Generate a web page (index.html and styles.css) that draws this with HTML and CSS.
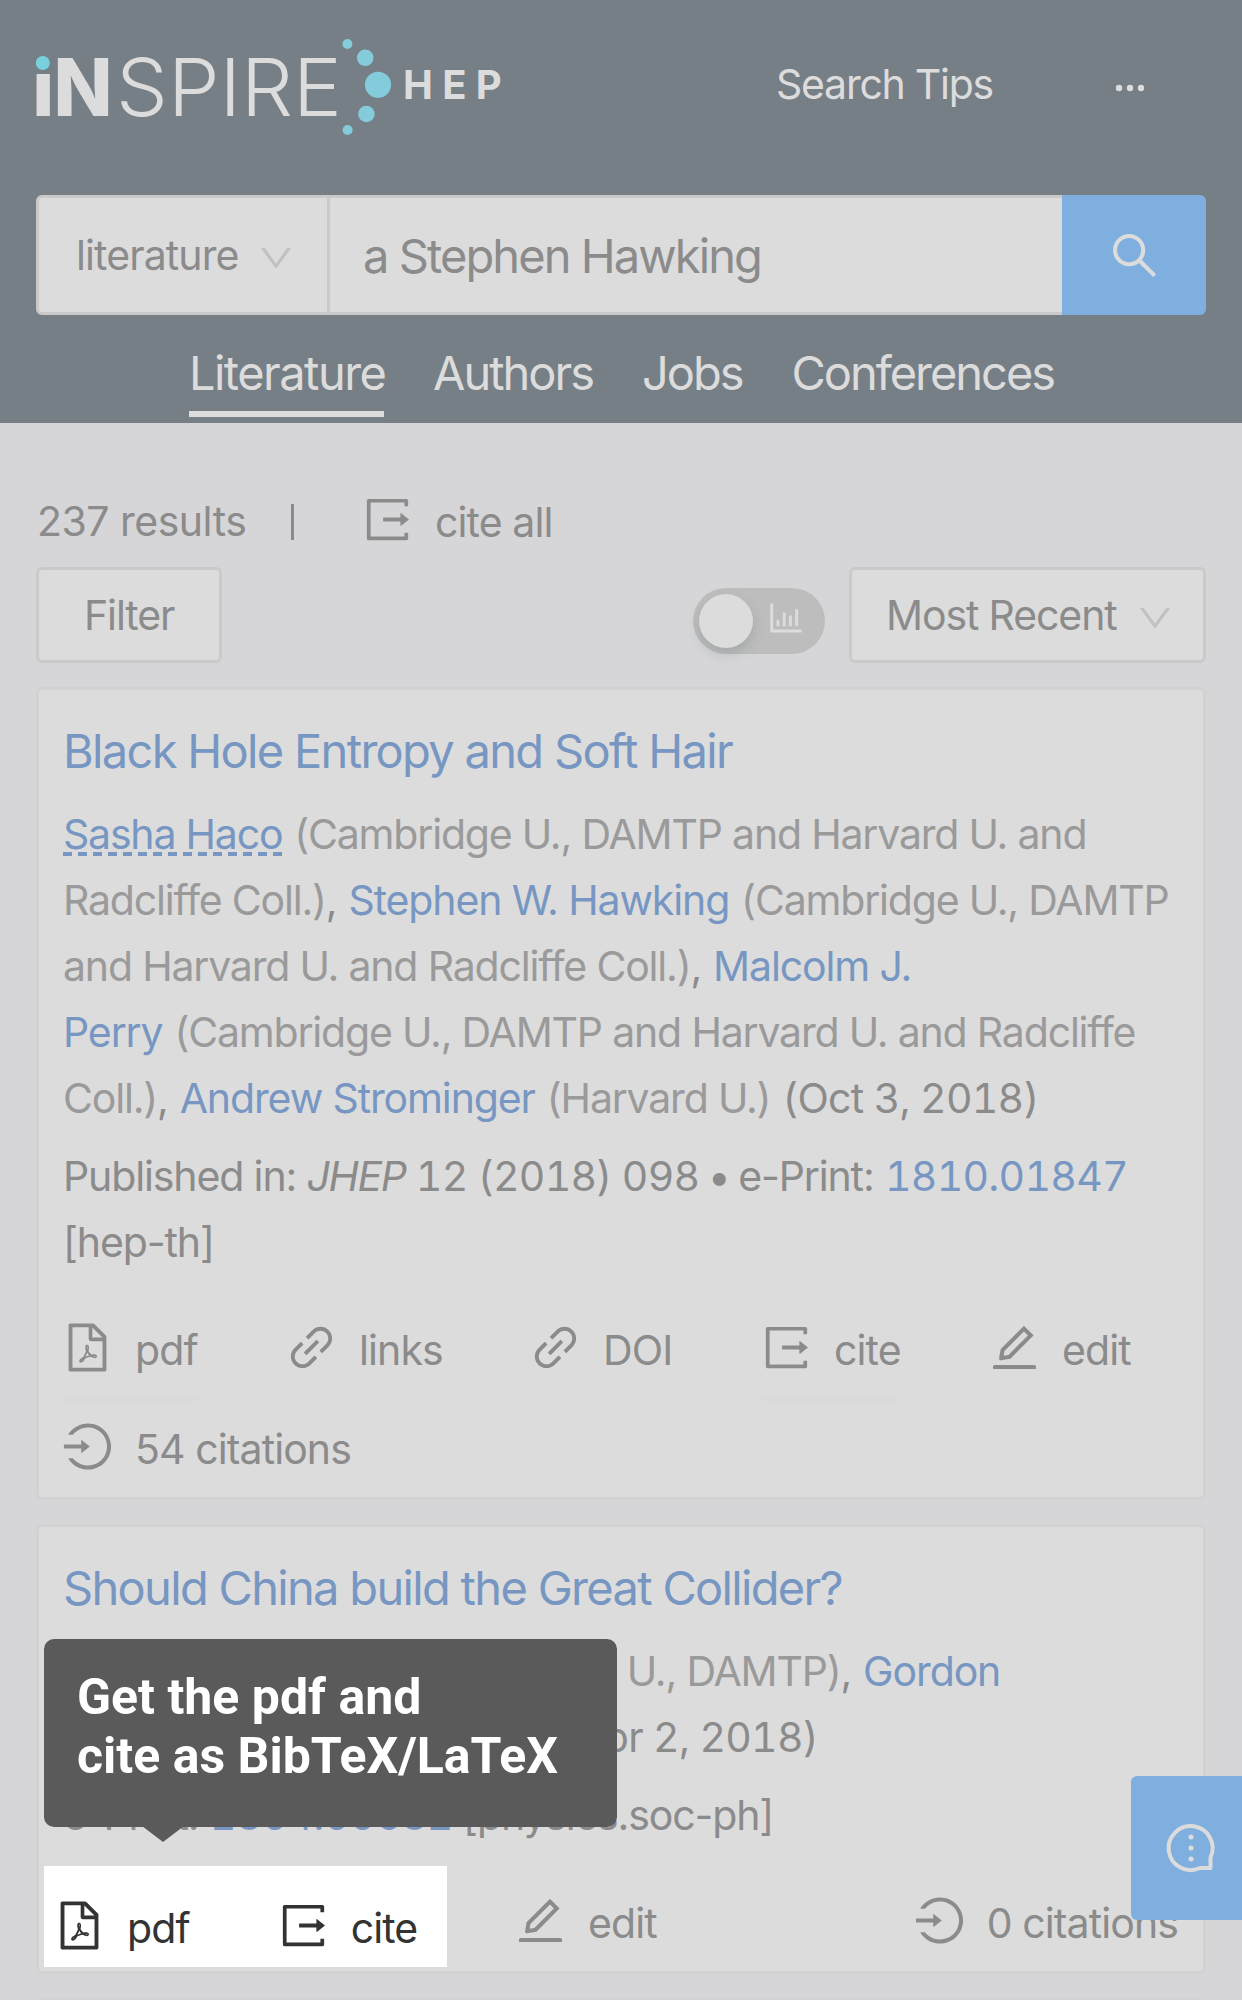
FILE: index.html
```
<!DOCTYPE html>
<html lang="en">
<head>
<meta charset="utf-8">
<title>a Stephen Hawking - INSPIRE</title>
<link rel="stylesheet" href="styles.css">
</head>
<body>
<svg class="sprite" aria-hidden="true">
  <symbol id="pdf" viewBox="0 0 1024 1024"><path d="M531.3 574.4l.3-1.4c5.8-23.9 13.1-53.7 7.4-80.7-3.8-21.3-19.5-29.6-32.9-30.2-15.8-.7-29.9 8.3-33.4 21.4-6.6 24-.7 56.8 10.1 98.6-13.6 32.4-35.3 79.5-51.2 107.5-29.6 15.3-69.3 38.9-75.2 68.7-1.2 5.5.2 12.5 3.5 18.8 3.7 7 9.6 12.4 16.5 15 3 1.1 6.6 2 10.8 2 17.6 0 46.1-14.2 84.1-79.4 5.8-1.9 11.8-3.9 17.6-5.9 27.2-9.2 55.4-18.8 80.9-23.1 28.2 15.1 60.3 24.8 82.1 24.8 21.6 0 30.1-12.8 33.3-20.5 5.6-13.5 2.9-30.5-6.2-39.6-13.2-13-45.3-16.4-95.3-10.2-24.6-15-40.7-35.4-52.4-65.8zM421.6 726.3c-13.9 20.2-24.4 30.3-30.1 34.7 6.7-12.3 19.8-25.3 30.1-34.7zm87.6-235.5c5.2 8.9 4.5 35.8.5 49.4-4.9-19.9-5.6-48.1-2.7-51.4.8.1 1.5.7 2.2 2zm-1.6 120.5c10.7 18.5 24.2 34.4 39.1 46.2-21.6 4.9-41.3 13-58.9 20.2-4.2 1.7-8.3 3.4-12.3 5 13.3-24.1 24.4-51.4 32.1-71.4zm155.6 65.5c.1.2.2.5-.4.9h-.2l-.2.3c-.8.5-9 5.3-44.3-8.6 40.6-1.9 45 7.3 45.1 7.4zm191.4-388.2L639.4 73.4c-6-6-14.1-9.4-22.6-9.4H192c-17.7 0-32 14.3-32 32v832c0 17.7 14.3 32 32 32h640c17.7 0 32-14.3 32-32V311.3c0-8.5-3.4-16.7-9.4-22.7zM790.2 326H602V137.8L790.2 326zm1.8 562H232V136h302v216a42 42 0 0 0 42 42h216v494z"/></symbol>
  <symbol id="link" viewBox="0 0 1024 1024"><path d="M574 665.4a8.03 8.03 0 0 0-11.3 0L446.5 781.6c-53.8 53.8-144.6 59.5-204 0-59.5-59.5-53.8-150.2 0-204l116.2-116.2c3.1-3.1 3.1-8.2 0-11.3l-39.8-39.8a8.03 8.03 0 0 0-11.3 0L191.4 526.5c-84.6 84.6-84.6 221.5 0 306s221.5 84.6 306 0l116.2-116.2c3.1-3.1 3.1-8.2 0-11.3L574 665.4zm258.6-474c-84.6-84.6-221.5-84.6-306 0L410.3 307.6a8.03 8.03 0 0 0 0 11.3l39.7 39.7c3.1 3.1 8.2 3.1 11.3 0l116.2-116.2c53.8-53.8 144.6-59.5 204 0 59.5 59.5 53.8 150.2 0 204L665.3 562.6a8.03 8.03 0 0 0 0 11.3l39.8 39.8c3.1 3.1 8.2 3.1 11.3 0l116.2-116.2c84.5-84.6 84.5-221.5 0-306.1zM610.1 372.3a8.03 8.03 0 0 0-11.3 0L372.3 598.7a8.03 8.03 0 0 0 0 11.3l39.6 39.6c3.1 3.1 8.2 3.1 11.3 0l226.4-226.4c3.1-3.1 3.1-8.2 0-11.3l-39.5-39.6z"/></symbol>
  <symbol id="export" viewBox="0 0 1024 1024"><path d="M888.3 757.4h-53.8c-4.2 0-7.7 3.5-7.7 7.7v61.8H197.1V197.1h629.8v61.8c0 4.2 3.5 7.7 7.7 7.7h53.8c4.2 0 7.7-3.4 7.7-7.7V158.7c0-17-13.7-30.7-30.7-30.7H158.7c-17 0-30.7 13.7-30.7 30.7v706.6c0 17 13.7 30.7 30.7 30.7h706.6c17 0 30.7-13.7 30.7-30.7V765.1c0-4.3-3.5-7.7-7.7-7.7zm18.6-251.7L765 393.7c-5.3-4.2-13-.4-13 6.3v76H438c-4.4 0-8 3.6-8 8v56c0 4.4 3.6 8 8 8h314v76c0 6.7 7.8 10.5 13 6.3l141.9-112a8 8 0 0 0 0-12.6z"/></symbol>
  <symbol id="edit" viewBox="0 0 1024 1024"><path d="M257.7 752c2 0 4-.2 6-.5L431.9 722c2-.4 3.9-1.3 5.3-2.8l423.9-423.9a9.96 9.96 0 0 0 0-14.1L694.9 114.9c-1.9-1.9-4.4-2.9-7.1-2.9s-5.2 1-7.1 2.9L256.8 538.8c-1.5 1.5-2.4 3.3-2.8 5.3l-29.5 168.2a33.5 33.5 0 0 0 9.4 29.8c6.6 6.4 14.9 9.9 23.8 9.9zm67.4-174.4L687.8 215l73.3 73.3-362.7 362.6-88.9 15.7 15.6-89zM880 836H144c-17.7 0-32 14.3-32 32v36c0 4.4 3.6 8 8 8h784c4.4 0 8-3.6 8-8v-36c0-17.7-14.3-32-32-32z"/></symbol>
  <symbol id="login" viewBox="0 0 1024 1024"><path d="M521.7 82c-152.5-.4-286.7 78.5-363.4 197.7-3.4 5.3.4 12.3 6.7 12.3h70.3c4.8 0 9.3-2.1 12.3-5.8 7-8.5 14.5-16.7 22.4-24.5 32.6-32.5 70.5-58.1 112.7-75.9 43.6-18.4 90-27.8 137.9-27.8 47.9 0 94.3 9.3 137.9 27.8 42.2 17.8 80.1 43.4 112.7 75.9 32.6 32.5 58.1 70.4 76 112.5C865.7 417.8 875 464.1 875 512c0 47.9-9.4 94.2-27.8 137.8-17.8 42.1-43.4 80-76 112.5s-70.5 58.1-112.7 75.9A352.8 352.8 0 0 1 520.6 866c-47.9 0-94.3-9.4-137.9-27.8A353.84 353.84 0 0 1 270 762.3c-7.9-7.9-15.3-16.1-22.4-24.5-3-3.7-7.6-5.8-12.3-5.8H165c-6.3 0-10.2 7-6.7 12.3C234.9 863.2 368.5 942 520.6 942c236.2 0 428-190.1 430.4-425.6C953.4 277.1 761.3 82.6 521.7 82zM395.02 624v-76h-314c-4.4 0-8-3.6-8-8v-56c0-4.4 3.6-8 8-8h314v-76c0-6.7 7.8-10.5 13-6.3l141.9 112a8 8 0 0 1 0 12.6l-141.9 112c-5.2 4.1-13 .4-13-6.3z"/></symbol>
  <symbol id="search" viewBox="0 0 1024 1024"><path d="M909.6 854.5L649.9 594.8C690.2 542.7 712 479 712 412c0-80.2-31.3-155.4-87.9-212.1-56.6-56.7-132-87.9-212.1-87.9s-155.5 31.3-212.1 87.9C143.2 256.5 112 331.8 112 412c0 80.1 31.3 155.5 87.9 212.1C256.5 680.8 331.8 712 412 712c67 0 130.6-21.8 182.7-62l259.7 259.6a8.2 8.2 0 0 0 11.6 0l43.6-43.5a8.2 8.2 0 0 0 0-11.6zM570.4 570.4C528 612.7 471.8 636 412 636s-116-23.3-158.4-65.6C211.3 528 188 471.8 188 412s23.3-116.1 65.6-158.4C296 211.3 352.2 188 412 188s116.1 23.2 158.4 65.6S636 352.2 636 412s-23.3 116.1-65.6 158.4z"/></symbol>
  <symbol id="down" viewBox="0 0 1024 1024"><path d="M884 256h-75c-5.1 0-9.9 2.5-12.9 6.6L512 654.2 227.9 262.6c-3-4.1-7.8-6.6-12.9-6.6h-75c-6.5 0-10.3 7.4-6.5 12.7l352.6 486.1c12.8 17.6 39 17.6 51.7 0l352.6-486.1c3.9-5.3.1-12.7-6.4-12.7z"/></symbol>
  <symbol id="chart" viewBox="0 0 1024 1024"><path d="M888 792H200V168c0-4.4-3.6-8-8-8h-56c-4.4 0-8 3.6-8 8v688c0 4.4 3.6 8 8 8h752c4.4 0 8-3.6 8-8v-56c0-4.4-3.6-8-8-8zm-600-80h56c4.4 0 8-3.6 8-8V560c0-4.4-3.6-8-8-8h-56c-4.4 0-8 3.6-8 8v144c0 4.4 3.6 8 8 8zm152 0h56c4.4 0 8-3.6 8-8V384c0-4.4-3.6-8-8-8h-56c-4.4 0-8 3.6-8 8v320c0 4.4 3.6 8 8 8zm152 0h56c4.4 0 8-3.6 8-8V462c0-4.4-3.6-8-8-8h-56c-4.4 0-8 3.6-8 8v242c0 4.4 3.6 8 8 8zm152 0h56c4.4 0 8-3.6 8-8V304c0-4.4-3.6-8-8-8h-56c-4.4 0-8 3.6-8 8v400c0 4.4 3.6 8 8 8z"/></symbol>
</svg>

<header class="header">
  <div class="topbar">
    <svg class="logo" viewBox="36 0 480 195" role="img" aria-label="iNSPIRE HEP">
      <clipPath id="stem"><rect x="30" y="74" width="26" height="50"/></clipPath>
      <g class="logo-ink">
        <text class="logo-bold" clip-path="url(#stem)" x="32.2" y="116" textLength="22" lengthAdjust="spacingAndGlyphs">i</text>
        <text class="logo-bold" x="53.5" y="116" textLength="59" lengthAdjust="spacingAndGlyphs">N</text>
        <text class="logo-thin" x="116" y="116" textLength="226" lengthAdjust="spacingAndGlyphs">SPIRE</text>
        <text class="logo-hep" x="403" y="99">HEP</text>
      </g>
      <circle class="logo-dot-i" cx="42.8" cy="63" r="7"/>
      <g class="logo-dots">
        <circle cx="347.4" cy="44" r="5"/><circle cx="365.2" cy="57.8" r="8.3"/><circle cx="378" cy="84.8" r="13.1"/><circle cx="366.4" cy="114" r="8.3"/><circle cx="347.6" cy="130" r="5"/>
      </g>
    </svg>
    <a class="tips">Search Tips</a>
    <svg class="more" viewBox="0 0 36 12"><circle cx="6" cy="6" r="3.2"/><circle cx="17" cy="6" r="3.2"/><circle cx="28" cy="6" r="3.2"/></svg>
  </div>
  <form class="search">
    <div class="scope"><span>literature</span><svg class="caret"><use href="#down"/></svg></div>
    <div class="query">a Stephen Hawking</div>
    <div class="go"><svg class="icon"><use href="#search"/></svg></div>
  </form>
  <nav class="nav">
    <a class="active">Literature</a><a>Authors</a><a>Jobs</a><a>Conferences</a>
  </nav>
</header>

<main class="main">
  <div class="summary">
    <span class="count">237 results</span>
    <span class="bar"></span>
    <span class="action cite-all"><svg class="icon"><use href="#export"/></svg><span>cite all</span></span>
  </div>
  <div class="tools">
    <div class="filter">Filter</div>
    <div class="toggle"><span class="knob"></span><svg class="chart"><use href="#chart"/></svg></div>
    <div class="sort"><span>Most Recent</span><svg class="caret"><use href="#down"/></svg></div>
  </div>

  <article class="card">
    <h3>Black Hole Entropy and Soft Hair</h3>
    <p class="authors"><a class="self">Sasha Haco</a> <span class="aff">(Cambridge U., DAMTP and Harvard U. and<br>Radcliffe Coll.)</span>, <a>Stephen W. Hawking</a> <span class="aff">(Cambridge U., DAMTP<br>and Harvard U. and Radcliffe Coll.)</span>, <a>Malcolm J.<br>Perry</a> <span class="aff">(Cambridge U., DAMTP and Harvard U. and Radcliffe<br>Coll.)</span>, <a>Andrew Strominger</a> <span class="aff">(Harvard U.)</span> <span class="num">(Oct 3, 2018)</span></p>
    <p class="pub">Published in: <i>JHEP</i> <span class="num">12 (2018) 098</span> <span class="bullet">•</span> e-Print: <a class="num">1810.01847</a><br>[hep-th]</p>
    <div class="actions first">
      <span class="action raised"><svg class="icon"><use href="#pdf"/></svg><span>pdf</span></span>
      <span class="action"><svg class="icon"><use href="#link"/></svg><span>links</span></span>
      <span class="action"><svg class="icon"><use href="#link"/></svg><span>DOI</span></span>
      <span class="action raised"><svg class="icon"><use href="#export"/></svg><span>cite</span></span>
      <span class="action"><svg class="icon"><use href="#edit"/></svg><span>edit</span></span>
      <span class="action wide"><svg class="icon"><use href="#login"/></svg><span>54 citations</span></span>
    </div>
  </article>

  <article class="card">
    <h3>Should China build the Great Collider?</h3>
    <p class="authors"><a>Stephen Hawking</a> <span class="aff">(Cambridge U., DAMTP)</span>, <a>Gordon<br>Kane</a> <span class="aff">(Michigan U., MCTP)</span> <span class="num">(Apr 2, 2018)</span></p>
    <p class="pub">e-Print: <a class="num">1804.00682</a> [physics.soc-ph]</p>
    <div class="actions second">
      <div class="spotlight">
        <span class="action"><svg class="icon"><use href="#pdf"/></svg><span>pdf</span></span>
        <span class="action"><svg class="icon"><use href="#export"/></svg><span>cite</span></span>
      </div>
      <span class="action"><svg class="icon"><use href="#edit"/></svg><span>edit</span></span>
      <span class="action"><svg class="icon"><use href="#login"/></svg><span>0 citations</span></span>
    </div>
    <div class="tooltip">Get the pdf and<br>cite as BibTeX/LaTeX</div>
  </article>
  <article class="card"></article>
</main>

<aside class="help">
  <svg viewBox="0 0 54 54"><path d="M46.5 36.5V47H36A22 22 0 1 1 46.5 36.5Z"/><circle cx="27" cy="16" r="2.5"/><circle cx="27" cy="27" r="2.5"/><circle cx="27" cy="38" r="2.5"/></svg>
</aside>
</body>
</html>
```
FILE: styles.css
```
* { box-sizing: border-box; }
html, body { height: 2000px; overflow: hidden; }
body {
  position: relative;
  margin: 0;
  background: #d6d6d8;
  color: #8b8b8b;
  font: 430 41px/66px Inter, "Liberation Sans", sans-serif;
  letter-spacing: -1.12px;
  white-space: nowrap;
}
h3, p { margin: 0; font-weight: inherit; }
svg { display: block; flex: none; fill: currentColor; }
.sprite { position: absolute; width: 0; height: 0; }
.icon { width: 55px; height: 55px; }
.caret { width: 40px; height: 40px; color: #c1c1c1; }

.header { height: 423px; padding: 0 36px; background: #777f86; color: #dcdcdc; }
.topbar { display: flex; height: 195px; }
.logo { width: 480px; height: 195px; }
.logo-ink { fill: #dcdcdc; letter-spacing: 0; }
.logo-bold { font-size: 80px; font-weight: 800; }
.logo-thin { font-size: 80px; font-weight: 260; }
.logo-hep { font-size: 40px; font-weight: 650; letter-spacing: 9.3px; }
.logo-dot-i { fill: #78d0dc; }
.logo-dots { fill: #84cbdc; }
.tips { width: 337px; margin: 51px 0 0 260px; letter-spacing: -1.25px; }
.more { width: 36px; height: 12px; margin-top: 82px; }

.search { display: flex; height: 120px; margin: 0; color: #8b8b8b; }
.scope, .query {
  display: flex;
  align-items: center;
  background: #dcdcdc;
  border: 3px solid #cacaca;
}
.scope { width: 294px; padding-left: 37px; border-radius: 6px 0 0 6px; letter-spacing: -.9px; }
.scope .caret { margin: 5px 31px 0 auto; }
.query { flex: 1; padding: 2px 0 0 33px; border-width: 3px 0; font-size: 47px; letter-spacing: -1.92px; }
.go {
  display: grid;
  place-items: center;
  width: 144px;
  background: #7fafdf;
  border-radius: 0 6px 6px 0;
  color: #dcdcdc;
}
.nav { display: flex; gap: 49px; padding: 22px 0 0 153px; font-size: 47px; line-height: 72px; letter-spacing: -2.02px; }
.nav a { height: 80px; border-bottom: 6px solid transparent; }
.nav .active { width: 195px; border-color: #dcdcdc; letter-spacing: -1.55px; }

.main { padding: 65px 36px 0; }
.summary { display: flex; height: 79px; }
.count { width: 254px; margin-left: 1px; letter-spacing: -.5px; }
.bar { width: 3px; height: 36px; margin: 16px 66px 0 0; background: #8b8b8b; }
.action { display: flex; gap: 20px; height: 66px; }
.action .icon { margin-top: 3px; }
.action > span { letter-spacing: -.9px; }
.cite-all { padding-top: 1px; }
.raised { position: relative; }
.raised::after {
  content: "";
  position: absolute;
  left: 3px;
  bottom: -20px;
  width: 135px;
  height: 6px;
  border-radius: 0 0 6px 6px;
  background: #dadada;
}

.tools { display: flex; height: 96px; margin-bottom: 24px; line-height: 90px; }
.filter, .sort { background: #dcdcdc; border: 3px solid #cacaca; border-radius: 6px; }
.filter { width: 186px; padding-left: 45px; box-shadow: 0 6px 0 #d3d5d8; }
.toggle {
  display: flex;
  width: 132px;
  height: 66px;
  margin: 21px 24px 0 auto;
  padding: 6px;
  border-radius: 33px;
  background: #bdbdbd;
  color: #dcdcdc;
}
.knob { width: 54px; height: 54px; border-radius: 50%; background: #dcdcdc; box-shadow: 0 6px 12px rgba(110, 125, 125, .3); }
.chart { width: 42px; height: 42px; margin: 3px 0 0 12px; }
.sort { display: flex; width: 357px; padding-left: 34px; }
.sort span { width: 249px; }
.sort .caret { margin-top: 28px; }

.card {
  position: relative;
  margin-bottom: 24px;
  padding: 24px 24px 15px;
  background: #dcdcdc;
  border: 3px solid #d2d2d3;
  border-radius: 6px;
}
.card h3 { height: 72px; margin-bottom: 15px; padding-top: 1px; font-size: 47px; line-height: 72px; letter-spacing: -1.68px; }
.card h3, .card a { color: #7797c2; }
.aff { margin-left: 1.5px; color: #9a9a9a; letter-spacing: -1.18px; }
.authors a + .aff ~ a, .authors .num { margin-left: 1.5px; }
.num { letter-spacing: -.75px; font-variant-numeric: tabular-nums; }
.pub a { margin-left: 1px; }
.self { letter-spacing: -1.2px; background: repeating-linear-gradient(90deg, #7797c2 0 9px, transparent 9px 15px) 0 calc(100% - 3px) / 100% 4px no-repeat; }
.pub { margin-top: 12px; }
.pub i { letter-spacing: -1.5px; }
.bullet { margin: 0 -2px; }
.actions { margin: 42px 0 0 -3px; }
.first { display: grid; grid-template-columns: 224px 244px 231px 228px 1fr; row-gap: 33px; }
.wide { grid-column: span 2; }
.second { position: relative; display: flex; justify-content: space-between; width: 1118px; padding-left: 453px; }

/* Guided-tour highlight and its caption */
.spotlight {
  position: absolute;
  left: -16px;
  top: -24px;
  display: flex;
  gap: 86px;
  width: 403px;
  height: 101px;
  padding: 29px 0 0 8px;
  background: #fff;
  color: #333;
}
.tooltip {
  position: absolute;
  left: 5px;
  top: 112px;
  width: 573px;
  height: 188px;
  padding: 29px 33px;
  border-radius: 10px;
  background: #5a5a5a;
  color: #fff;
  font: bold 50px/59px Roboto, sans-serif;
  letter-spacing: 0;
}
.tooltip::after {
  content: "";
  position: absolute;
  left: 98px;
  top: 187px;
  border: solid transparent;
  border-width: 16px 21px 0;
  border-top-color: #5a5a5a;
}

.help {
  position: absolute;
  right: 0;
  top: 1776px;
  width: 111px;
  height: 144px;
  padding: 45px 0 0 33px;
  border-radius: 6px 0 0 6px;
  background: #7fafdf;
  color: #dcdcdc;
}
.help svg { width: 54px; height: 54px; }
.help path { fill: none; stroke: currentColor; stroke-width: 4; stroke-linejoin: round; }
```
